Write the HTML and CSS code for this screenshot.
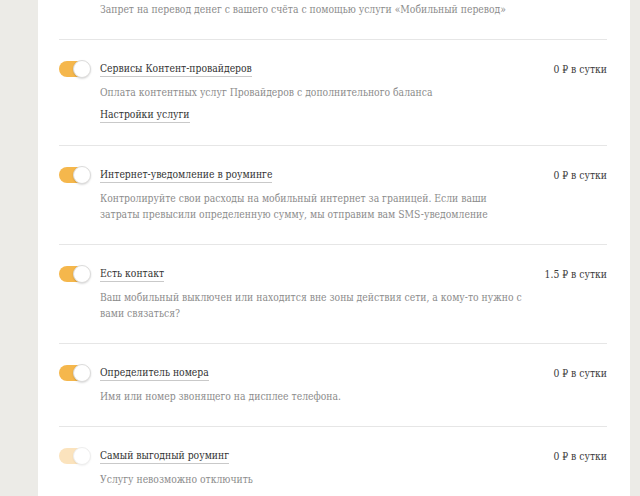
FILE: index.html
```html
<!DOCTYPE html>
<html lang="ru">
<head>
    <meta charset="UTF-8">
    <meta name="viewport" content="width=device-width, initial-scale=1.0">
    <title>Услуги</title>
    <link rel="stylesheet" href="styles.css">
</head>
<body>

<div class="page">
    <div class="services">

        <!-- Tail of the previous service -->
        <div class="service service-tail">
            <div class="service-desc">Запрет на перевод денег с вашего счёта с помощью услуги «Мобильный перевод»</div>
        </div>

        <div class="service">
            <span class="switch on"></span>
            <div class="service-body">
                <a href="#" class="service-title">Сервисы Контент-провайдеров</a>
                <div class="service-desc">Оплата контентных услуг Провайдеров с дополнительного баланса</div>
                <a href="#" class="service-link">Настройки услуги</a>
            </div>
            <div class="service-price">0 ₽ в сутки</div>
        </div>

        <div class="service">
            <span class="switch on"></span>
            <div class="service-body">
                <a href="#" class="service-title">Интернет-уведомление в роуминге</a>
                <div class="service-desc">Контролируйте свои расходы на мобильный интернет за границей. Если ваши<br>затраты превысили определенную сумму, мы отправим вам SMS-уведомление</div>
            </div>
            <div class="service-price">0 ₽ в сутки</div>
        </div>

        <div class="service">
            <span class="switch on"></span>
            <div class="service-body">
                <a href="#" class="service-title">Есть контакт</a>
                <div class="service-desc">Ваш мобильный выключен или находится вне зоны действия сети, а кому-то нужно с вами связаться?</div>
            </div>
            <div class="service-price">1.5 ₽ в сутки</div>
        </div>

        <div class="service">
            <span class="switch on"></span>
            <div class="service-body">
                <a href="#" class="service-title">Определитель номера</a>
                <div class="service-desc">Имя или номер звонящего на дисплее телефона.</div>
            </div>
            <div class="service-price">0 ₽ в сутки</div>
        </div>

        <div class="service">
            <span class="switch on disabled"></span>
            <div class="service-body">
                <a href="#" class="service-title">Самый выгодный роуминг</a>
                <div class="service-desc">Услугу невозможно отключить</div>
            </div>
            <div class="service-price">0 ₽ в сутки</div>
        </div>

    </div>
</div>

</body>
</html>
```

FILE: styles.css
```css
/* Page background and the white content card */
body {
    margin: 0;
    background-color: #ecebe7;
    font-family: "DejaVu Serif Condensed", "DejaVu Serif", serif;
    font-size: 10.3px;
    color: #333;
}

.page {
    margin-left: 38px;
    width: 592px;
    min-height: 496px;
    background-color: #ffffff;
}

.services {
    padding: 0 23px 0 21px;
}

/* One service row */
.service {
    display: grid;
    grid-template-columns: 31px 1fr auto;
    column-gap: 10px;
    padding: 21px 0 22px;
    border-bottom: 1px solid #e6e6e6;
}

.service-tail {
    display: block;
    padding: 1px 0 22px 41px;
}

.service-body {
    display: flex;
    flex-direction: column;
    align-items: flex-start;
}

.service-title,
.service-link {
    color: #333;
    text-decoration: none;
    line-height: 15px;
    border-bottom: 1px solid #c9c9c9;
}

.service-desc {
    max-width: 430px;
    margin-top: 7px;
    line-height: 16px;
    color: #8c8c8c;
}

.service-tail .service-desc {
    max-width: none;
    margin-top: 0;
}

.service-link {
    margin-top: 7px;
}

.service-price {
    line-height: 16px;
    color: #3a3a3a;
    white-space: nowrap;
}

/* Toggle switch */
.switch {
    position: relative;
    width: 31px;
    height: 16px;
    border-radius: 8px;
    background-color: #f5b74c;
}

.switch::after {
    content: "";
    position: absolute;
    top: -1px;
    right: -1px;
    width: 16px;
    height: 16px;
    border-radius: 50%;
    background-color: #ffffff;
    border: 1px solid #dcdcdc;
    box-shadow: 0 1px 2px rgba(0, 0, 0, 0.15);
}

.switch.disabled {
    background-color: #fbe3bd;
}

.switch.disabled::after {
    border-color: #eeeeee;
    box-shadow: 0 1px 2px rgba(0, 0, 0, 0.06);
}
```
